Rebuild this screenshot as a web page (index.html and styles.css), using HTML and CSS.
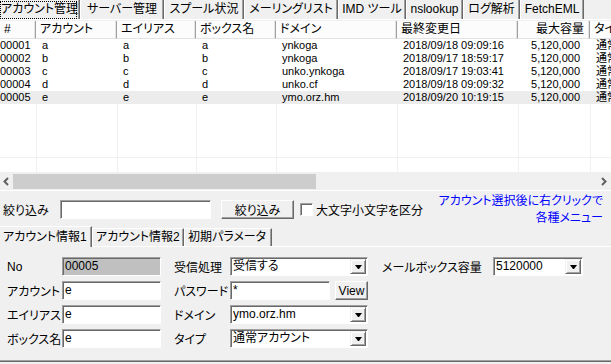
FILE: index.html
```html
<!DOCTYPE html>
<html lang="ja">
<head>
    <meta charset="UTF-8">
    <meta name="viewport" content="width=device-width, initial-scale=1.0">
    <title>アカウント管理</title>
    <link rel="stylesheet" href="styles.css">
</head>
<body>
    <nav class="main-tabs">
        <span class="tab tab-account active"><span class="focus">アカウント管理</span></span>
        <span class="tab tab-server">サーバー管理</span>
        <span class="tab tab-spool">スプール状況</span>
        <span class="tab tab-ml">メーリングリスト</span>
        <span class="tab tab-imd">IMD ツール</span>
        <span class="tab tab-ns">nslookup</span>
        <span class="tab tab-log">ログ解析</span>
        <span class="tab tab-fetch">FetchEML</span>
    </nav>

    <div class="list">
        <div class="list-head">
            <div class="th">#</div>
            <div class="th">アカウント</div>
            <div class="th">エイリアス</div>
            <div class="th">ボックス名</div>
            <div class="th">ドメイン</div>
            <div class="th">最終変更日</div>
            <div class="th num">最大容量</div>
            <div class="th">タイプ</div>
        </div>
        <div class="row">
            <div class="td no">00001</div><div class="td">a</div><div class="td">a</div><div class="td">a</div>
            <div class="td">ynkoga</div><div class="td">2018/09/18 09:09:16</div><div class="td num">5,120,000</div><div class="td">通常アカウント</div>
        </div>
        <div class="row">
            <div class="td no">00002</div><div class="td">b</div><div class="td">b</div><div class="td">b</div>
            <div class="td">ynkoga</div><div class="td">2018/09/17 18:59:17</div><div class="td num">5,120,000</div><div class="td">通常アカウント</div>
        </div>
        <div class="row">
            <div class="td no">00003</div><div class="td">c</div><div class="td">c</div><div class="td">c</div>
            <div class="td">unko.ynkoga</div><div class="td">2018/09/17 19:03:41</div><div class="td num">5,120,000</div><div class="td">通常アカウント</div>
        </div>
        <div class="row">
            <div class="td no">00004</div><div class="td">d</div><div class="td">d</div><div class="td">d</div>
            <div class="td">unko.cf</div><div class="td">2018/09/18 09:09:32</div><div class="td num">5,120,000</div><div class="td">通常アカウント</div>
        </div>
        <div class="row selected">
            <div class="td no">00005</div><div class="td">e</div><div class="td">e</div><div class="td">e</div>
            <div class="td">ymo.orz.hm</div><div class="td">2018/09/20 10:19:15</div><div class="td num">5,120,000</div><div class="td">通常アカウント</div>
        </div>
        <div class="list-empty"></div>
        <div class="hscroll">
            <span class="arrow">
                <svg width="13" height="17" viewBox="0 0 13 17"><polyline points="8,5 4.5,8.5 8,12" fill="none" stroke="#606060" stroke-width="2"/></svg>
            </span>
            <div class="track"><div class="thumb"></div></div>
            <span class="arrow">
                <svg width="13" height="17" viewBox="0 0 13 17"><polyline points="4,5 7.5,8.5 4,12" fill="none" stroke="#606060" stroke-width="2"/></svg>
            </span>
        </div>
    </div>

    <div class="filter">
        <label class="filter-label">絞り込み</label>
        <div class="field filter-input"></div>
        <button class="btn filter-btn">絞り込み</button>
        <span class="check"></span>
        <label class="check-label">大文字小文字を区分</label>
        <div class="hint">アカウント選択後に右クリックで<br>各種メニュー</div>
    </div>

    <nav class="sub-tabs">
        <span class="stab active">アカウント情報1</span>
        <span class="stab">アカウント情報2</span>
        <span class="stab">初期パラメータ</span>
    </nav>

    <div class="panel">
        <div class="form-row">
            <label class="lbl1">No</label>
            <div class="field f1 readonly">00005</div>
            <label class="lbl2">受信処理</label>
            <div class="combo f2"><span class="combo-text">受信する</span><span class="combo-btn"><i class="tri"></i></span></div>
            <label class="lbl3">メールボックス容量</label>
            <div class="combo f3"><span class="combo-text">5120000</span><span class="combo-btn"><i class="tri"></i></span></div>
        </div>
        <div class="form-row">
            <label class="lbl1">アカウント</label>
            <div class="field f1">e</div>
            <label class="lbl2">パスワード</label>
            <div class="f2 pass">
                <div class="field pass-input">*</div>
                <button class="btn view-btn">View</button>
            </div>
        </div>
        <div class="form-row">
            <label class="lbl1">エイリアス</label>
            <div class="field f1">e</div>
            <label class="lbl2">ドメイン</label>
            <div class="combo f2"><span class="combo-text">ymo.orz.hm</span><span class="combo-btn"><i class="tri"></i></span></div>
        </div>
        <div class="form-row">
            <label class="lbl1">ボックス名</label>
            <div class="field f1">e</div>
            <label class="lbl2">タイプ</label>
            <div class="combo f2"><span class="combo-text">通常アカウント</span><span class="combo-btn"><i class="tri"></i></span></div>
        </div>
    </div>
</body>
</html>
```

FILE: styles.css
```css
body {
    margin: 0;
    width: 611px;
    height: 364px;
    overflow: hidden;
    background: #f0f0f0;
    color: #000;
    font-family: "Liberation Sans", "Noto Sans CJK JP", sans-serif;
    font-size: 12px;
    font-feature-settings: "palt";
}

/* top tab strip */
.main-tabs {
    display: flex;
    height: 19px;
    border-bottom: 1px solid #fff;
}
.main-tabs .tab {
    box-sizing: border-box;
    height: 19px;
    line-height: 18px;
    text-align: center;
    white-space: nowrap;
    border-left: 1px solid #fff;
    border-right: 1px solid #696969;
    box-shadow: inset -1px 0 #a0a0a0;
}
.main-tabs .active {
    border-left: 0;
    padding: 1px 2px 2px 0;
}
.main-tabs .focus {
    display: block;
    height: 16px;
    line-height: 15px;
    border: 1px dotted #000;
}
.tab-account { width: 80px; }
.tab-server { width: 84px; }
.tab-spool { width: 80px; }
.tab-ml { width: 94px; }
.tab-imd { width: 68px; }
.tab-ns { width: 57px; }
.tab-log { width: 57px; }
.tab-fetch { width: 64px; }

/* account list */
.list {
    margin-top: 1px;
    width: 611px;
    overflow: hidden;
    background: #fff;
    border-bottom: 1px solid #fff;
}
.list-head, .row {
    display: grid;
    grid-template-columns: 36px 81px 79px 80px 121px 121px 72px 60px;
    width: 650px;
}
.list-head {
    height: 18px;
    background: #fcfcfc;
}
.th {
    box-sizing: border-box;
    height: 18px;
    line-height: 17px;
    padding-left: 4px;
    white-space: nowrap;
    overflow: hidden;
    border-right: 1px solid #a0a0a0;
    border-bottom: 1px solid #e3e3e3;
    box-shadow: inset -1px 0 #e3e3e3;
}
.th.num {
    text-align: right;
    padding-right: 5px;
}
.row {
    height: 13px;
    line-height: 13px;
    font-size: 11px;
}
.row.selected {
    background: #ececec;
}
.td {
    padding-left: 6px;
    white-space: nowrap;
    overflow: hidden;
}
.td.no {
    padding-left: 0;
}
.td.num {
    text-align: right;
    padding-right: 10px;
}
.list-empty {
    height: 69px;
    background:
        linear-gradient(#f0f0f0, #f0f0f0) 0 53px / 100% 1px no-repeat,
        linear-gradient(#f0f0f0, #f0f0f0) 0 68px / 100% 1px no-repeat,
        linear-gradient(#f0f0f0, #f0f0f0) 36px 0 / 1px 100% no-repeat,
        linear-gradient(#f0f0f0, #f0f0f0) 117px 0 / 1px 100% no-repeat,
        linear-gradient(#f0f0f0, #f0f0f0) 196px 0 / 1px 100% no-repeat,
        linear-gradient(#f0f0f0, #f0f0f0) 276px 0 / 1px 100% no-repeat,
        linear-gradient(#f0f0f0, #f0f0f0) 397px 0 / 1px 100% no-repeat,
        linear-gradient(#f0f0f0, #f0f0f0) 518px 0 / 1px 100% no-repeat,
        linear-gradient(#f0f0f0, #f0f0f0) 590px 0 / 1px 100% no-repeat;
}
.hscroll {
    display: flex;
    height: 17px;
    background: #f0f0f0;
}
.hscroll .arrow {
    width: 13px;
    height: 17px;
}
.hscroll svg {
    display: block;
}
.track {
    flex: 1;
    padding: 1px 0;
}
.thumb {
    width: 303px;
    height: 15px;
    background: #cdcdcd;
}

/* common controls */
.field {
    box-sizing: border-box;
    height: 19px;
    line-height: 17px;
    padding-left: 2px;
    background: #fff;
    border: 1px solid;
    border-color: #a0a0a0 #fff #fff #a0a0a0;
    box-shadow: inset 1px 1px #696969;
    white-space: nowrap;
    overflow: hidden;
}
.field.readonly {
    background: #c0c0c0;
}
.btn {
    box-sizing: border-box;
    height: 19px;
    margin: 0;
    padding: 0;
    font: inherit;
    color: #000;
    background: #f0f0f0;
    border: 1px solid;
    border-color: #fff #696969 #696969 #fff;
    box-shadow: inset -1px -1px #a0a0a0;
}
.combo {
    box-sizing: border-box;
    display: flex;
    height: 19px;
    background: #fff;
    border: 1px solid;
    border-color: #a0a0a0 #fff #fff #a0a0a0;
    box-shadow: inset 1px 1px #696969;
    padding: 1px 1px 1px 2px;
}
.combo-text {
    flex: 1;
    line-height: 15px;
    white-space: nowrap;
    overflow: hidden;
}
.combo-btn {
    box-sizing: border-box;
    width: 16px;
    height: 15px;
    display: flex;
    align-items: center;
    justify-content: center;
    background: #f0f0f0;
    border: 1px solid;
    border-color: #f0f0f0 #696969 #696969 #f0f0f0;
    box-shadow: inset 1px 1px #fff, inset -1px -1px #a0a0a0;
}
.tri {
    width: 1px;
    height: 0;
    border-top: 4px solid #000;
    border-left: 3px solid transparent;
    border-right: 3px solid transparent;
}

/* filter row */
.filter {
    display: flex;
    align-items: center;
    height: 33px;
    margin-top: 2px;
    padding-left: 3px;
}
.filter-label {
    width: 57px;
}
.filter-input {
    width: 151px;
    height: 19px;
}
.filter-btn {
    width: 73px;
    margin-left: 10px;
}
.check {
    box-sizing: border-box;
    width: 13px;
    height: 13px;
    margin-left: 6px;
    background: #fff;
    border: 1px solid;
    border-color: #a0a0a0 #fff #fff #a0a0a0;
    box-shadow: inset 1px 1px #696969;
}
.check-label {
    margin-left: 3px;
}
.hint {
    margin-left: auto;
    margin-right: 8px;
    text-align: right;
    line-height: 17px;
    color: #0000ff;
}

/* detail tabs */
.sub-tabs {
    display: flex;
    align-items: flex-end;
    height: 19px;
    margin-top: 1px;
    border-bottom: 1px solid #fff;
}
.stab {
    box-sizing: border-box;
    width: 92px;
    height: 18px;
    line-height: 17px;
    padding-left: 3px;
    white-space: nowrap;
    border-top: 1px solid #fff;
    border-left: 1px solid #fff;
    border-right: 1px solid #696969;
    box-shadow: inset -1px 0 #a0a0a0;
}
.stab:last-child {
    width: 88px;
}
.stab.active {
    height: 21px;
    line-height: 20px;
    margin-bottom: -1px;
    border-left: 0;
    background: #f0f0f0;
}

.panel {
    box-sizing: border-box;
    height: 115px;
    padding: 10px 0 0 7px;
    border-bottom: 1px solid #696969;
    box-shadow: inset 0 -1px #a0a0a0;
}
.form-row {
    display: flex;
    align-items: center;
    height: 19px;
    margin-bottom: 5px;
}
.lbl1 { width: 55px; }
.f1 { width: 99px; }
.lbl2 { width: 56px; margin-left: 13px; }
.f2 { width: 138px; }
.lbl3 { width: 111px; margin-left: 14px; }
.f3 { width: 90px; }
.pass {
    display: flex;
    gap: 5px;
}
.pass-input {
    width: 100px;
}
.view-btn {
    width: 33px;
}
```
